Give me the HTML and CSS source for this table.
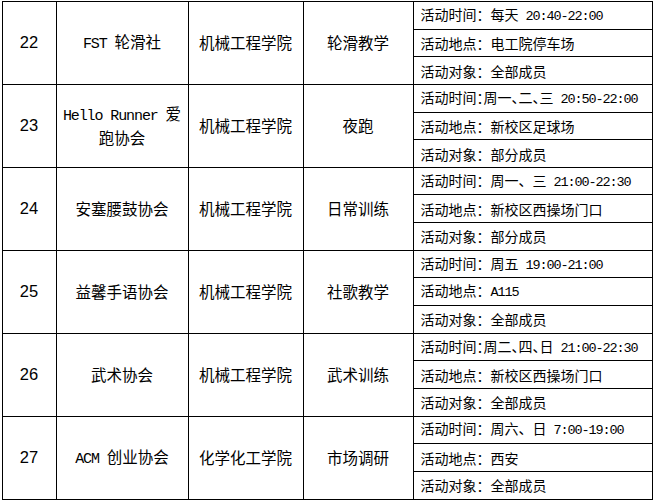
FILE: index.html
```html
<!DOCTYPE html>
<html lang="zh-CN">
<head>
<meta charset="utf-8">
<link rel="stylesheet" href="styles.css">
</head>
<body>
<table class="clubs">
<colgroup>
<col class="c-no"><col class="c-name"><col class="c-col"><col class="c-type"><col class="c-info">
</colgroup>
<tbody>
<tr><td class="no" rowspan="3">22</td><td class="mid" rowspan="3"><span class="lat">FST </span>轮滑社</td><td class="mid" rowspan="3">机械工程学院</td><td class="mid" rowspan="3">轮滑教学</td><td class="info">活动时间：每天<span class="lat2"> 20:40-22:00</span></td></tr>
<tr><td class="info">活动地点：电工院停车场</td></tr>
<tr><td class="info">活动对象：全部成员</td></tr>

<tr><td class="no" rowspan="3">23</td><td class="mid wrap" rowspan="3"><span class="lat">Hello Runner </span>爱跑协会</td><td class="mid" rowspan="3">机械工程学院</td><td class="mid" rowspan="3">夜跑</td><td class="info">活动时间<span class="h">：</span>周一<span class="h">、</span>二<span class="h">、</span>三<span class="lat2"> 20:50-22:00</span></td></tr>
<tr><td class="info">活动地点：新校区足球场</td></tr>
<tr><td class="info">活动对象：部分成员</td></tr>

<tr><td class="no" rowspan="3">24</td><td class="mid" rowspan="3">安塞腰鼓协会</td><td class="mid" rowspan="3">机械工程学院</td><td class="mid" rowspan="3">日常训练</td><td class="info">活动时间：周一、三<span class="lat2"> 21:00-22:30</span></td></tr>
<tr><td class="info">活动地点：新校区西操场门口</td></tr>
<tr><td class="info">活动对象：部分成员</td></tr>

<tr><td class="no" rowspan="3">25</td><td class="mid" rowspan="3">益馨手语协会</td><td class="mid" rowspan="3">机械工程学院</td><td class="mid" rowspan="3">社歌教学</td><td class="info">活动时间：周五<span class="lat2"> 19:00-21:00</span></td></tr>
<tr><td class="info">活动地点：<span class="lat2">A115</span></td></tr>
<tr><td class="info">活动对象：全部成员</td></tr>

<tr><td class="no" rowspan="3">26</td><td class="mid" rowspan="3">武术协会</td><td class="mid" rowspan="3">机械工程学院</td><td class="mid" rowspan="3">武术训练</td><td class="info">活动时间<span class="h">：</span>周二<span class="h">、</span>四<span class="h">、</span>日<span class="lat2"> 21:00-22:30</span></td></tr>
<tr><td class="info">活动地点：新校区西操场门口</td></tr>
<tr><td class="info">活动对象：全部成员</td></tr>

<tr><td class="no" rowspan="3">27</td><td class="mid" rowspan="3"><span class="lat">ACM </span>创业协会</td><td class="mid" rowspan="3">化学化工学院</td><td class="mid" rowspan="3">市场调研</td><td class="info">活动时间：周六、日<span class="lat2"> 7:00-19:00</span></td></tr>
<tr><td class="info">活动地点：西安</td></tr>
<tr><td class="info">活动对象：全部成员</td></tr>
</tbody>
</table>
</body>
</html>
```
FILE: styles.css
```css
html, body {
  margin: 0;
  padding: 0;
  background: #fff;
}
body {
  padding: 1px 0 0 1.5px;
  font-family: "Noto Sans CJK SC", "Liberation Sans", sans-serif;
  color: #000;
}
.clubs {
  border-collapse: collapse;
  table-layout: fixed;
  width: 650px;
}
.c-no { width: 54px; }
.c-name { width: 132px; }
.c-col { width: 115px; }
.c-type { width: 110px; }
.c-info { width: 239px; }
.clubs td {
  border: 1px solid #000;
  padding: 0;
  vertical-align: middle;
}
.clubs tr {
  height: 27.65px;
}
.no {
  font-family: "Liberation Sans", Arial, sans-serif;
  font-size: 16.5px;
  text-align: center;
}
.mid {
  font-size: 15.5px;
  text-align: center;
  line-height: 21px;
  padding: 0 5px !important;
}
.wrap {
  padding: 0 4px !important;
}
.info {
  font-size: 14px;
  line-height: 16px;
  padding: 0 0 0 7px !important;
  white-space: nowrap;
  overflow: hidden;
}
.lat {
  font-family: "Liberation Mono", monospace;
  font-size: 15px;
  letter-spacing: -1.1px;
  white-space: pre;
}
.lat2 {
  font-family: "Liberation Mono", monospace;
  font-size: 13.5px;
  letter-spacing: -1.1px;
  white-space: pre;
}
.h {
  font-feature-settings: "halt";
}
```
